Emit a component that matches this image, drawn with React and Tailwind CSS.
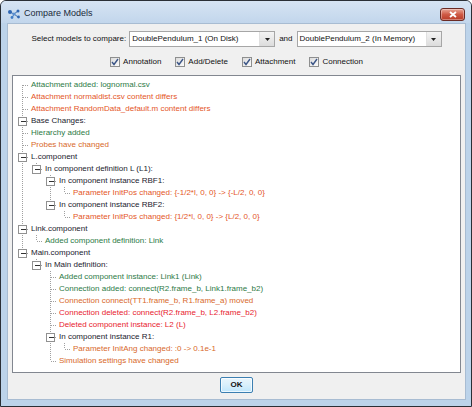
import React from 'react'

const GREEN = 'text-[#2d7a46]'
const DIFF = 'text-[#e4561f]'
const CHANGED = 'text-[#d8692a]'
const RED = 'text-[#e8222e]'
const DARK = 'text-[#1b1b2e]'

const tree = [
  { text: 'Attachment added: lognormal.csv', color: GREEN },
  { text: 'Attachment normaldist.csv content differs', color: DIFF },
  { text: 'Attachment RandomData_default.m content differs', color: DIFF },
  { text: 'Base Changes:', color: DARK, expander: true },
  { text: 'Hierarchy added', color: GREEN },
  { text: 'Probes have changed', color: CHANGED },
  {
    text: 'L.component', color: DARK, children: [
      {
        text: 'In component definition L (L1):', color: DARK, children: [
          { text: 'In component instance RBF1:', color: DARK, children: [
            { text: 'Parameter InitPos changed: {-1/2*l, 0, 0} -> {-L/2, 0, 0}', color: DIFF },
          ] },
          { text: 'In component instance RBF2:', color: DARK, children: [
            { text: 'Parameter InitPos changed: {1/2*l, 0, 0} -> {L/2, 0, 0}', color: DIFF },
          ] },
        ],
      },
    ],
  },
  {
    text: 'Link.component', color: DARK, children: [
      { text: 'Added component definition: Link', color: GREEN },
    ],
  },
  {
    text: 'Main.component', color: DARK, children: [
      {
        text: 'In Main definition:', color: DARK, children: [
          { text: 'Added component instance: Link1 (Link)', color: GREEN },
          { text: 'Connection added: connect(R2.frame_b, Link1.frame_b2)', color: GREEN },
          { text: 'Connection connect(TT1.frame_b, R1.frame_a) moved', color: CHANGED },
          { text: 'Connection deleted: connect(R2.frame_b, L2.frame_b2)', color: RED },
          { text: 'Deleted component instance: L2 (L)', color: RED },
          { text: 'In component instance R1:', color: DARK, children: [
            { text: 'Parameter InitAng changed: :0 -> 0.1e-1', color: CHANGED },
          ] },
          { text: 'Simulation settings have changed', color: CHANGED },
        ],
      },
    ],
  },
]

function flatten(nodes, depth, ancestorsNext, out) {
  nodes.forEach((node, i) => {
    const hasNext = i < nodes.length - 1
    out.push({ ...node, depth, ancestorsNext, hasNext, firstRoot: depth === 0 && i === 0 })
    if (node.children) flatten(node.children, depth + 1, [...ancestorsNext, hasNext], out)
  })
  return out
}

const rows = flatten(tree, 0, [], [])

export default function App() {
  return (
    <div className="flex h-[407px] w-[472px] flex-col overflow-hidden rounded-t-[6px] border border-[#2a2f36] bg-[#bcd3ea] font-['Liberation_Sans',Arial,sans-serif] text-[8px] text-[#111]">
      <TitleBar />
      <div className="mb-[6px] ml-[6px] mr-[5px] flex flex-1 flex-col border border-[#a8bcd2] bg-[#f0f0f0]">
        <div className="mt-[7px] flex items-center justify-center">
          <span className="mr-[3px]">Select models to compare:</span>
          <Combo value="DoublePendulum_1 (On Disk)" width="w-[146px]" />
          <span className="mx-[4px]">and</span>
          <Combo value="DoublePendulum_2 (In Memory)" width="w-[145px]" />
        </div>

        <div className="mt-[9px] flex h-[12px] items-center justify-center gap-[14px]">
          <Check label="Annotation" />
          <Check label="Add/Delete" />
          <Check label="Attachment" />
          <Check label="Connection" />
        </div>

        <div className="mx-[4px] mt-[7px] h-[298px] overflow-hidden border border-[#828790] bg-white pl-[2px] pt-[3px]">
          {rows.map((row, i) => (
            <div key={i} className="flex h-[12px] items-center whitespace-nowrap">
              <TreeLines row={row} />
              <span className={`ml-[2px] leading-[12px] ${row.color}`}>{row.text}</span>
            </div>
          ))}
        </div>

        <div className="mt-[4px] flex justify-center">
          <button className="h-[16px] w-[33px] rounded-[2px] border border-[#3c7fb1] bg-gradient-to-b from-[#eaf6fd] via-[#d9f0fc] to-[#bee6fd] text-[8px] font-bold leading-none text-[#111] shadow-[inset_0_0_0_1px_rgba(255,255,255,0.7)]">
            OK
          </button>
        </div>
      </div>
    </div>
  )
}

function TitleBar() {
  return (
    <div className="flex h-[22px] shrink-0 items-center bg-gradient-to-b from-[#d6e4f3] to-[#c2d6ec] pl-[6px] pr-[6px] pt-[4px]">
      <svg width="14" height="10" viewBox="0 0 14 10" className="mr-[3px]">
        <g stroke="#3a6fb0" strokeWidth="1">
          <line x1="3" y1="3" x2="7" y2="5" />
          <line x1="7" y1="5" x2="11" y2="2" />
          <line x1="7" y1="5" x2="5" y2="9" />
          <line x1="7" y1="5" x2="11" y2="8" />
        </g>
        <circle cx="3" cy="3" r="2" fill="#2f66b3" />
        <circle cx="7" cy="5" r="1.6" fill="#5b8fd0" />
        <circle cx="11" cy="2" r="1.5" fill="#2f66b3" />
        <circle cx="5" cy="8.5" r="1.4" fill="#3f7cc6" />
        <circle cx="11.5" cy="8" r="1.4" fill="#2f66b3" />
      </svg>
      <span className="text-[9px] text-[#1a2a3a]">Compare Models</span>
      <div className="ml-auto flex h-[13px] w-[25px] items-center justify-center rounded-[3px] border border-[#6b2b24] bg-gradient-to-b from-[#e8a596] via-[#cf5a45] to-[#b83a26] shadow-[inset_0_0_0_1px_rgba(255,255,255,0.35)]">
        <svg width="8" height="7" viewBox="0 0 8 7">
          <path d="M1 1 L7 6 M7 1 L1 6" stroke="white" strokeWidth="1.8" />
        </svg>
      </div>
    </div>
  )
}

function Combo({ value, width }) {
  return (
    <div className={`flex h-[16px] ${width} items-stretch border border-[#a6a6a6] bg-white`}>
      <span className="flex flex-1 items-center overflow-hidden whitespace-nowrap pl-[2px]">{value}</span>
      <span className="flex w-[15px] items-center justify-center border-l border-[#e0e0e0] bg-gradient-to-b from-[#f4f4f4] to-[#dcdcdc]">
        <svg width="5" height="3" viewBox="0 0 5 3">
          <path d="M0 0 H5 L2.5 3 Z" fill="#222" />
        </svg>
      </span>
    </div>
  )
}

function Check({ label }) {
  return (
    <label className="flex items-center gap-[3px]">
      <span className="flex h-[10px] w-[10px] items-center justify-center border border-[#8e8f8f] bg-gradient-to-br from-[#dcdcdc] to-[#fbfbfb]">
        <svg width="8" height="8" viewBox="0 0 8 8">
          <path d="M1 4 L3 6.5 L7 1" stroke="#3c5687" strokeWidth="1.4" fill="none" />
        </svg>
      </span>
      <span>{label}</span>
    </label>
  )
}

function TreeLines({ row }) {
  const w = 14 * (row.depth + 1)
  const cx = 7.5 + 14 * row.depth
  const hasBox = row.expander || row.children
  const dot = { stroke: '#a0a0a0', strokeWidth: 1, strokeDasharray: '1 1' }
  return (
    <svg width={w} height="12" className="shrink-0" shapeRendering="crispEdges">
      {row.ancestorsNext.map((next, k) =>
        next ? <line key={k} x1={7.5 + 14 * k} y1="0" x2={7.5 + 14 * k} y2="12" {...dot} /> : null
      )}
      {!row.firstRoot && <line x1={cx} y1="0" x2={cx} y2="6" {...dot} />}
      {row.hasNext && <line x1={cx} y1="6" x2={cx} y2="12" {...dot} />}
      <line x1={cx} y1="6.5" x2={w} y2="6.5" {...dot} />
      {hasBox && (
        <g>
          <rect x={cx - 4} y="2.5" width="8" height="8" fill="white" stroke="#919191" />
          <line x1={cx - 2} y1="6.5" x2={cx + 3} y2="6.5" stroke="#333" />
        </g>
      )}
    </svg>
  )
}
